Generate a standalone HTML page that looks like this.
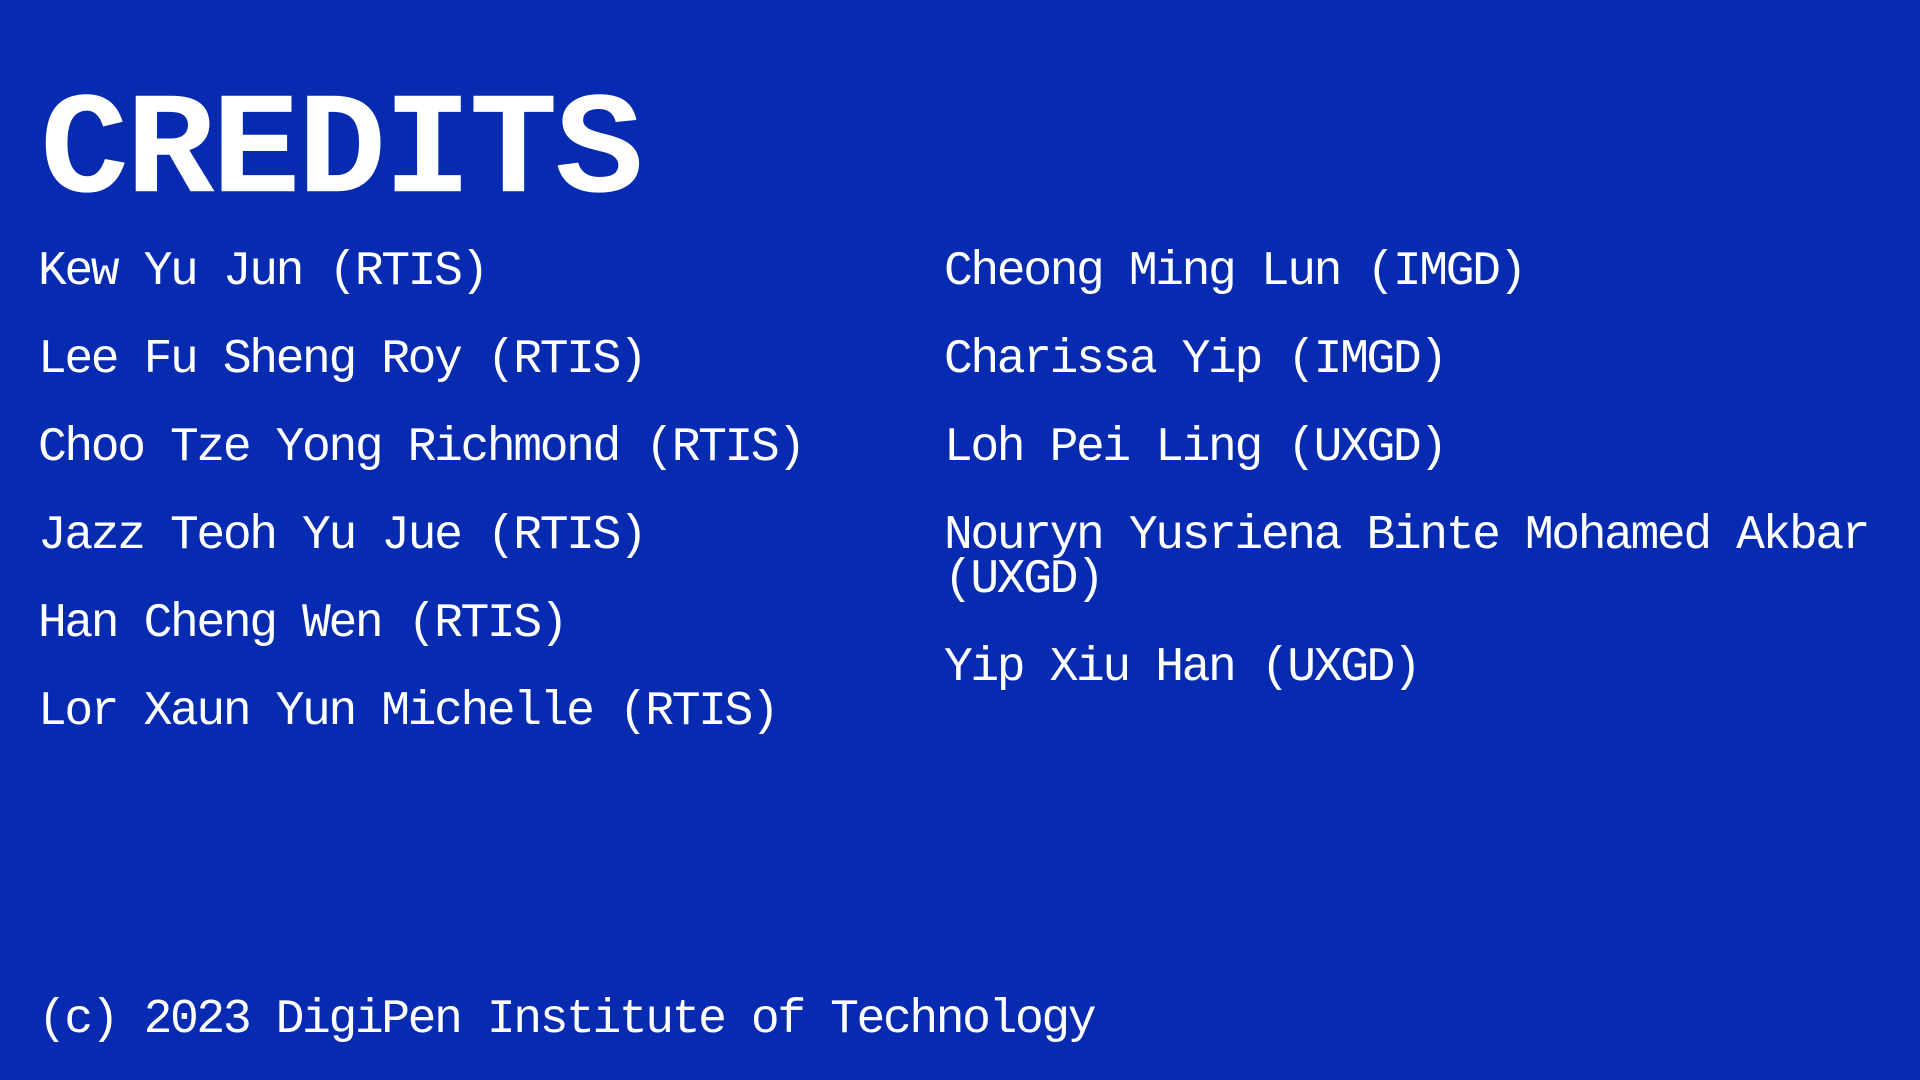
<html><head><style>
body{margin:0;width:1920px;height:1080px;background:#062bb1;overflow:hidden;font-family:"Liberation Mono",monospace;color:#fff}
div{position:absolute;line-height:1;white-space:nowrap}
.h{left:40px;top:80px;font-size:148px;letter-spacing:-3px;font-weight:bold;transform:scaleY(0.98)}
.n{font-size:48px;letter-spacing:-2.4px}
.l{left:38px}.r{left:944px}
</style></head><body>
<div class="h">CREDITS</div>
<div class="n l" style="top:248px">Kew Yu Jun (RTIS)</div>
<div class="n l" style="top:336px">Lee Fu Sheng Roy (RTIS)</div>
<div class="n l" style="top:424px">Choo Tze Yong Richmond (RTIS)</div>
<div class="n l" style="top:512px">Jazz Teoh Yu Jue (RTIS)</div>
<div class="n l" style="top:600px">Han Cheng Wen (RTIS)</div>
<div class="n l" style="top:688px">Lor Xaun Yun Michelle (RTIS)</div>
<div class="n r" style="top:248px">Cheong Ming Lun (IMGD)</div>
<div class="n r" style="top:336px">Charissa Yip (IMGD)</div>
<div class="n r" style="top:424px">Loh Pei Ling (UXGD)</div>
<div class="n r" style="top:512px">Nouryn Yusriena Binte Mohamed Akbar</div>
<div class="n r" style="top:556px">(UXGD)</div>
<div class="n r" style="top:644px">Yip Xiu Han (UXGD)</div>
<div class="n l" style="top:996px">(c) 2023 DigiPen Institute of Technology</div>
</body></html>
